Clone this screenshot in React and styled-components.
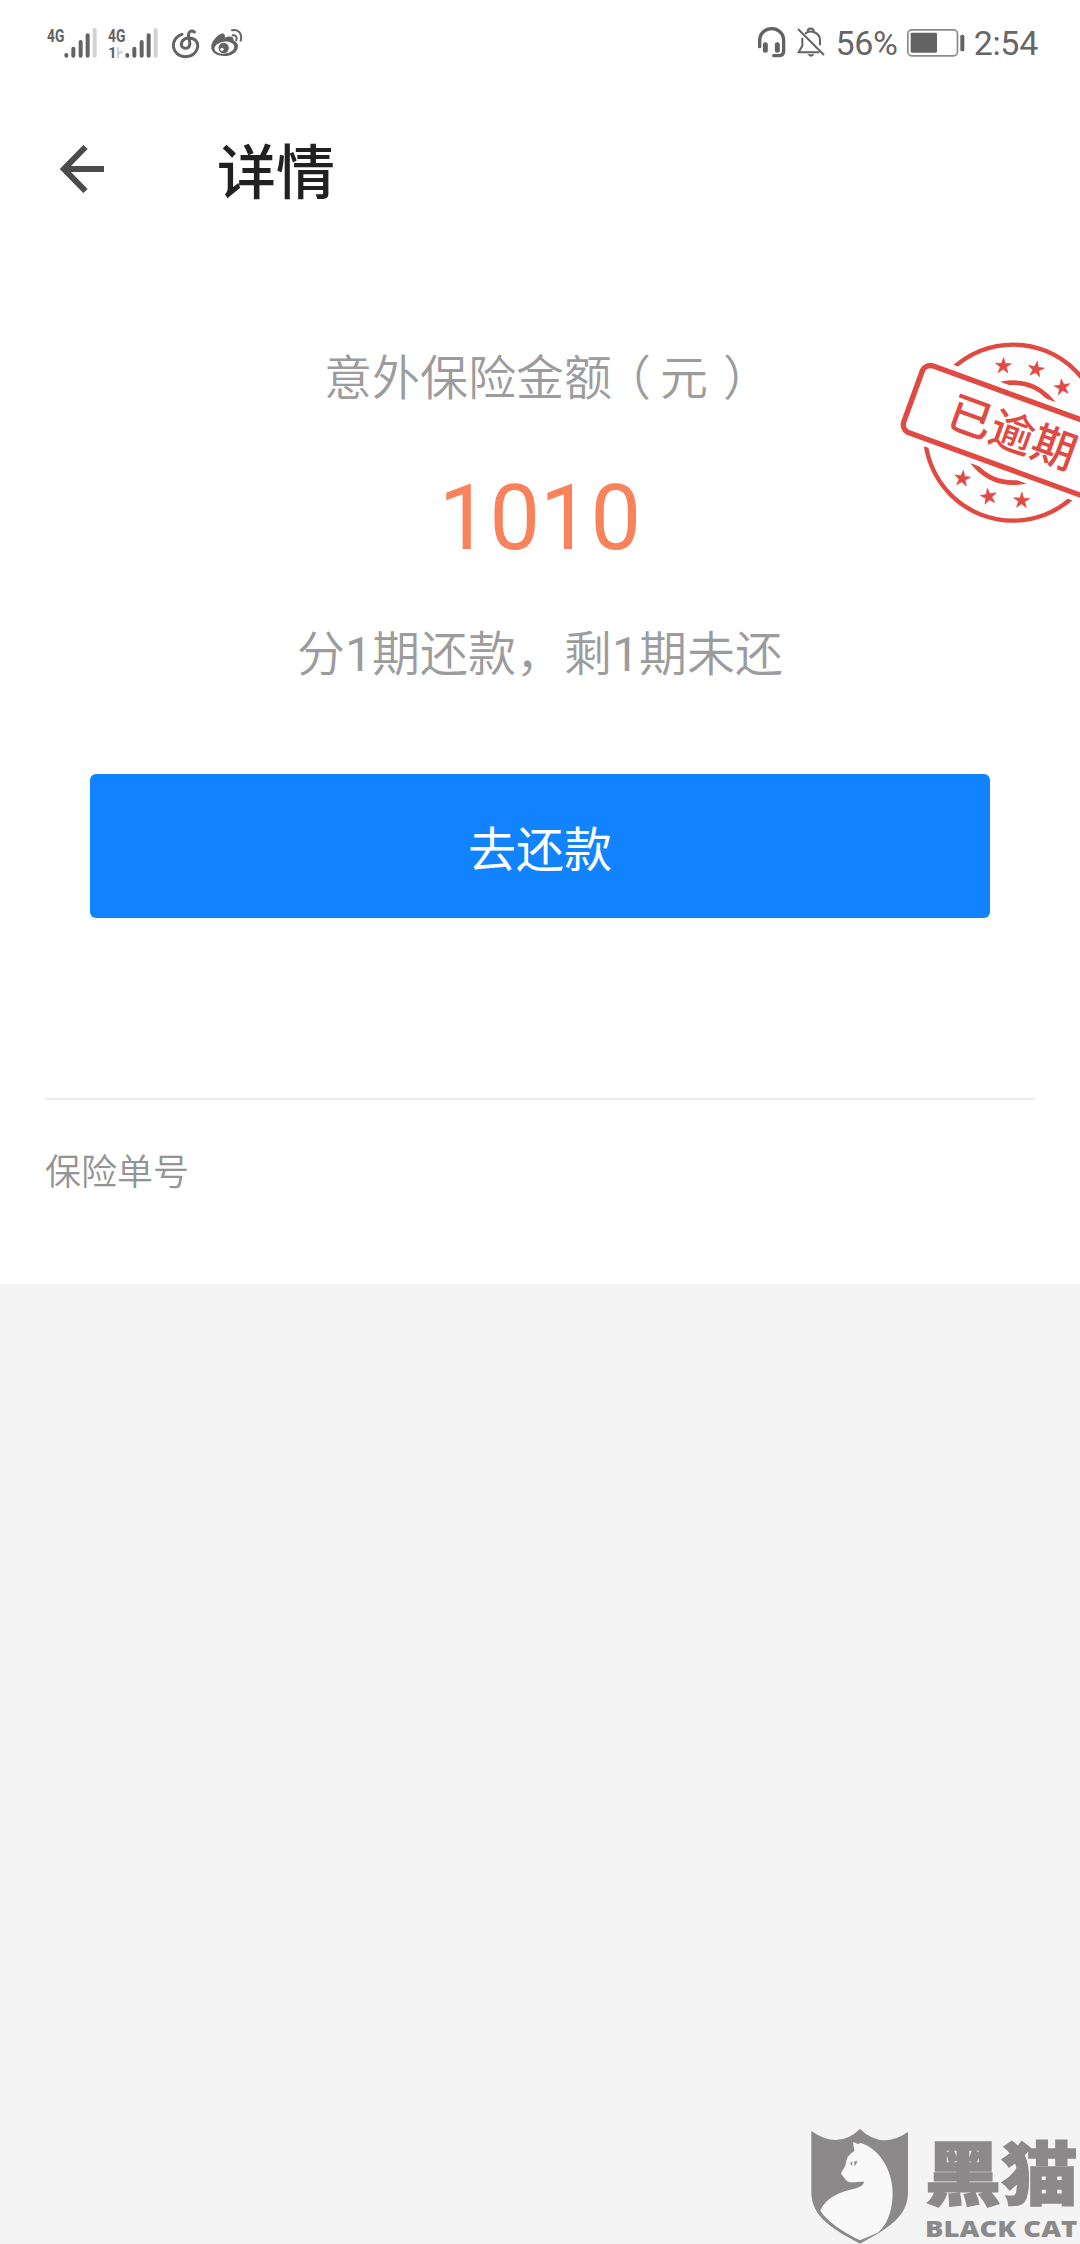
import React from "react";
import styled, { createGlobalStyle } from "styled-components";

const STAR = "M0 -25L5.6 -7.7L23.8 -7.7L9.1 2.9L14.7 20.2L0 9.5L-14.7 20.2L-9.1 2.9L-23.8 -7.7L-5.6 -7.7Z";

const stars = [
  { x: 370, y: 138, r: 2 },
  { x: 468, y: 148, r: 10 },
  { x: 547, y: 202, r: -8 },
  { x: 247, y: 476, r: 8 },
  { x: 326, y: 530, r: -10 },
  { x: 425, y: 542, r: 2 },
];

const Signal = ({ second }) => (
  <SignalSvg width="52" height="34" viewBox="0 0 156 102">
    <SignalText x="0" y="48" textLength="52" lengthAdjust="spacingAndGlyphs">
      4G
    </SignalText>
    {second && (
      <>
        <SlotText x="0" y="96">1</SlotText>
        <path d="M30 64v32M30 84l14-8" stroke="#d2d2d2" strokeWidth="7" fill="none" />
      </>
    )}
    <g stroke="#636363" strokeWidth="12" strokeLinecap="round">
      <path d="M58 87v2M79 68v21M101 48v41M122 28v61" />
      <path d="M143 12v77" stroke="#d2d2d2" />
    </g>
  </SignalSvg>
);

const MusicIcon = () => (
  <svg width="28" height="32" viewBox="0 0 84 96" fill="none" stroke="#636363" strokeWidth="9" strokeLinecap="round">
    <path d="M30 22C-8 34 -4 88 41 89C84 88 90 34 52 33C26 33 20 62 40 64C58 64 54 44 50 30C47 14 58 8 67 15" />
  </svg>
);

const WeiboIcon = () => (
  <svg width="34" height="30" viewBox="0 0 102 90">
    <path
      fill="#636363"
      d="M4 54C6 36 30 12 41 17C46 20 45 25 44 29C57 23 73 24 71 38C96 46 84 84 44 84C18 84 2 72 4 54Z"
    />
    <ellipse cx="43" cy="59" rx="30" ry="18" fill="#fff" transform="rotate(-8 43 59)" />
    <circle cx="41" cy="60" r="15.5" fill="#636363" />
    <circle cx="36" cy="64" r="5" fill="#fff" />
    <g fill="none" stroke="#636363" strokeWidth="6" strokeLinecap="round">
      <path d="M68 22C78 20 82 28 79 37" />
      <path d="M66 7C86 2 98 18 92 38" />
    </g>
  </svg>
);

const HeadsetIcon = () => (
  <svg width="30" height="34" viewBox="0 0 90 102" fill="none" stroke="#636363" strokeLinecap="round">
    <path d="M8 62V44C8 -4 80 -4 80 44V74Q80 89 64 89H50" strokeWidth="10" />
    <path d="M25 56v17M61 56v17" strokeWidth="15" />
  </svg>
);

const BellOffIcon = () => (
  <svg width="30" height="32" viewBox="0 0 90 96" fill="none" stroke="#636363" strokeWidth="6">
    <path d="M6 6L84 84" />
    <path d="M19 32V56L8 76H70M27 20C42 6 72 16 72 40V55M35 13C35 2 53 2 53 13" />
    <path d="M34 82H56Q45 96 34 82Z" fill="#636363" stroke="none" />
  </svg>
);

const BatteryIcon = () => (
  <svg width="58" height="28" viewBox="0 0 174 84">
    <rect x="2.5" y="2.5" width="149" height="78" rx="12" fill="none" stroke="#8a8a8a" strokeWidth="5" />
    <rect x="11" y="11" width="79" height="60" rx="4" fill="#636363" />
    <rect x="160" y="17" width="12" height="50" rx="5" fill="#636363" />
  </svg>
);

const Stamp = () => (
  <StampSvg viewBox="0 0 600 660">
    <g fill="none" stroke="#e04a42">
      <circle cx="399" cy="338" r="264" strokeWidth="13" />
      <circle cx="399" cy="338" r="150" strokeWidth="14" />
    </g>
    <g transform="translate(399 338) rotate(20)">
      <rect x="-340" y="-130" width="680" height="260" fill="#fff" />
      <rect x="-319" y="-106" width="638" height="213" rx="26" fill="none" stroke="#e04a42" strokeWidth="16" />
      <StampText x="-2" y="48" textAnchor="middle">
        已逾期
      </StampText>
    </g>
    {stars.map((s) => (
      <path
        key={`${s.x}-${s.y}`}
        d={STAR}
        fill="#e04a42"
        stroke="#e04a42"
        strokeWidth="2"
        transform={`translate(${s.x} ${s.y}) rotate(${s.r})`}
      />
    ))}
  </StampSvg>
);

const BlackCatLogo = () => (
  <LogoSvg viewBox="0 0 870 402">
    <path
      fill="#8b8989"
      d="M64 63Q145 120 210 57Q275 120 354 66V245C354 315 305 350 210 401C115 350 64 315 64 245Z"
    />
    <path
      fill="#f9f9f9"
      d="M189 96L204 102L213 99C275 120 310 190 308 255C306 315 285 350 263 368L210 391C160 366 115 338 91 302C105 265 150 245 190 237C208 232 221 226 222 215C200 215 185 219 174 215C166 210 164 204 154 193C153 180 165 178 168 158C170 140 181 130 193 123Z"
    />
    <path fill="#8b8989" d="M181 158L187 154Q185 162 188 167Q181 165 181 158ZM192 155L201 152Q201 164 192 167Q195 160 192 155Z" />
    <LogoText x="404" y="271" textLength="460" lengthAdjust="spacingAndGlyphs">
      黑猫
    </LogoText>
    <LogoLatin x="405" y="380" textLength="457" lengthAdjust="spacingAndGlyphs">
      BLACK CAT
    </LogoLatin>
  </LogoSvg>
);

const App = () => {
  return (
    <Page>
      <GlobalStyle />
      <Panel>
        <StatusBar>
          <StatusLeft>
            <Signal />
            <Signal second />
            <MusicIcon />
            <WeiboIcon />
          </StatusLeft>
          <StatusRight>
            <HeadsetIcon />
            <BellOffIcon />
            <StatusText>56%</StatusText>
            <BatteryIcon />
            <StatusText>2:54</StatusText>
          </StatusRight>
        </StatusBar>

        <NavBar>
          <BackButton aria-label="返回">
            <svg width="44" height="48" viewBox="0 0 44 48" fill="none" stroke="#4b4b4b" strokeWidth="6">
              <path d="M25.5 2L4 24L25.5 46M4 24H44" />
            </svg>
          </BackButton>
          <NavTitle>详情</NavTitle>
        </NavBar>

        <Summary>
          <AmountLabel>
            意外保险金额<Paren $shift={-9}>（</Paren>元<Paren $shift={15}>）</Paren>
          </AmountLabel>
          <Amount>1010</Amount>
          <Installments>
            分<Digit>1</Digit>期还款，剩<Digit>1</Digit>期未还
          </Installments>
          <PayButton>去还款</PayButton>
          <Stamp />
        </Summary>

        <PolicyRow>保险单号</PolicyRow>
      </Panel>
      <BlackCatLogo />
    </Page>
  );
};

export default App;

// Styled Components
const GlobalStyle = createGlobalStyle`
  * {
    box-sizing: border-box;
  }

  body {
    margin: 0;
    font-family: Roboto, "Noto Sans CJK SC", sans-serif;
  }
`;

const Page = styled.div`
  position: relative;
  height: 2244px;
  overflow: hidden;
  background-color: #f4f4f4;
`;

const Panel = styled.div`
  height: 1284px;
  background-color: #fff;
`;

const StatusBar = styled.div`
  display: flex;
  justify-content: space-between;
  height: 86px;
  padding: 0 42px 0 47px;
`;

const StatusLeft = styled.div`
  display: flex;
  align-items: center;
  gap: 9px;

  svg:nth-child(3) {
    margin: 0 1px 0 3px;
  }
`;

const StatusRight = styled.div`
  display: flex;
  align-items: center;
  gap: 9px;
`;

const StatusText = styled.span`
  font-size: 34px;
  line-height: 40px;
  letter-spacing: -0.3px;
  color: #666;
`;

const SignalSvg = styled.svg`
  overflow: visible;
`;

const SignalText = styled.text`
  font: 700 56px Roboto, sans-serif;
  fill: #636363;
`;

const SlotText = styled.text`
  font: 700 46px Roboto, sans-serif;
  fill: #636363;
`;

const NavBar = styled.div`
  display: flex;
  align-items: center;
  height: 166px;
  padding-left: 60px;
`;

const BackButton = styled.button`
  display: flex;
  padding: 0;
  border: none;
  background: none;
`;

const NavTitle = styled.h1`
  margin: 10px 0 0 113px;
  font-size: 59px;
  font-weight: 500;
  line-height: 88px;
  color: #212121;
`;

const Summary = styled.div`
  position: relative;
  display: flex;
  flex-direction: column;
  align-items: center;
  height: 848px;
  margin: 0 45px;
  padding-top: 92px;
  border-bottom: 2px solid #ececec;
`;

const AmountLabel = styled.div`
  font-size: 48px;
  font-weight: 350;
  line-height: 70px;
  white-space: nowrap;
  color: #9c9c9c;
`;

const Paren = styled.span`
  margin-left: ${({ $shift }) => $shift}px;
  margin-right: ${({ $shift }) => -$shift}px;
`;

const Amount = styled.div`
  margin-top: 52px;
  font-size: 90px;
  line-height: 106px;
  color: #f8825c;
`;

const Installments = styled.div`
  margin-top: 48px;
  font-size: 48px;
  font-weight: 350;
  line-height: 70px;
  color: #9c9c9c;
`;

const Digit = styled.span`
  font-weight: 400;
`;

const PayButton = styled.button`
  width: 900px;
  height: 144px;
  margin-top: 84px;
  border: none;
  border-radius: 6px;
  background-color: #1283ff;
  color: #fff;
  font-family: inherit;
  font-size: 48px;
`;

const StampSvg = styled.svg`
  position: absolute;
  top: 68px;
  right: -45px;
  width: 200px;
  height: 220px;
`;

const StampText = styled.text`
  font: 500 133px "Noto Sans CJK SC", sans-serif;
  fill: #e04a42;
`;

const PolicyRow = styled.div`
  padding: 46px 45px;
  font-size: 36px;
  font-weight: 350;
  line-height: 54px;
  color: #949494;
`;

const LogoSvg = styled.svg`
  position: absolute;
  right: 0;
  bottom: 0;
  width: 290px;
  height: 134px;
`;

const LogoText = styled.text`
  font: 900 208px "Noto Sans CJK SC", sans-serif;
  fill: #8b8989;
  stroke: #8b8989;
  stroke-width: 4px;
`;

const LogoLatin = styled.text`
  font: 800 70px "Open Sans", sans-serif;
  fill: #8b8989;
`;
